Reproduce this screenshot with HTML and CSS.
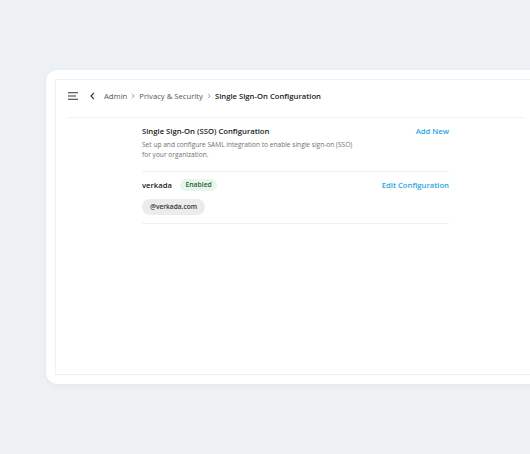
FILE: index.html
```html
<!DOCTYPE html>
<html>
<head>
<meta charset="utf-8">
<link rel="stylesheet" href="styles.css">
</head>
<body>
<div class="card">
  <div class="frame">
    <div class="header">
      <svg class="menu" width="10" height="8" viewBox="0 0 10 8"><path d="M0 0.75H10M0 4H8M0 7.25H10" stroke="#333" stroke-width="1.1"/></svg>
      <svg class="back" width="5" height="8" viewBox="0 0 5 8"><path d="M4 0.8L1 4L4 7.2" stroke="#333" stroke-width="1.2" fill="none"/></svg>
      <nav class="crumbs">
        <span class="crumb">Admin</span>
        <svg class="sep" width="4" height="6" viewBox="0 0 4 6"><path d="M1 0.8L3 3L1 5.2" stroke="#888" stroke-width="0.8" fill="none"/></svg>
        <span class="crumb">Privacy &amp; Security</span>
        <svg class="sep" width="4" height="6" viewBox="0 0 4 6"><path d="M1 0.8L3 3L1 5.2" stroke="#888" stroke-width="0.8" fill="none"/></svg>
        <span class="crumb current">Single Sign-On Configuration</span>
      </nav>
    </div>
    <div class="divider"></div>
    <div class="content">
      <div class="section">
        <div class="section-text">
          <div class="title">Single Sign-On (SSO) Configuration</div>
          <div class="desc">Set up and configure SAML integration to enable single sign-on (SSO) for your organization.</div>
        </div>
        <a class="link">Add New</a>
      </div>
      <div class="row">
        <div class="row-top">
          <div class="row-name">
            <span class="name">verkada</span>
            <span class="badge">Enabled</span>
          </div>
          <a class="link">Edit Configuration</a>
        </div>
        <span class="chip">@verkada.com</span>
      </div>
    </div>
  </div>
</div>
</body>
</html>
```
FILE: styles.css
```css
html, body {
  margin: 0;
  padding: 0;
}
body {
  background: #eef1f3;
  width: 530px;
  height: 454px;
  overflow: hidden;
  font-family: "Open Sans", "Noto Sans", sans-serif;
  color: #222;
}
.card {
  margin: 70px 0 0 46px;
  width: 500px;
  height: 314px;
  box-sizing: border-box;
  padding: 9px;
  background: #fff;
  border-radius: 12px;
  box-shadow: 0 2px 6px rgba(0,0,0,0.04);
}
.frame {
  height: 296px;
  box-sizing: border-box;
  border: 1px solid #eef0f2;
}
.header {
  height: 32px;
  display: flex;
  align-items: center;
  padding-left: 12px;
}
.menu { display: block; }
.back { display: block; margin-left: 12px; }
.crumbs {
  margin-left: 9px;
  display: flex;
  align-items: center;
  gap: 4px;
  font-size: 7.7px;
  color: #555;
}
.sep { display: block; }
.current { font-weight: 600; color: #222; }
.divider {
  margin: 5px 11px 0 11px;
  height: 1px;
  background: #f1f2f4;
}
.content {
  margin-left: 86px;
  width: 307px;
}
.section {
  display: flex;
  justify-content: space-between;
  align-items: flex-start;
  padding: 7px 0 11px;
  border-bottom: 1px solid #eef0f2;
}
.title {
  font-size: 7.7px;
  font-weight: 600;
  line-height: 12px;
}
.desc {
  margin-top: 3px;
  width: 220px;
  font-size: 6.6px;
  line-height: 10px;
  color: #707070;
}
.link {
  font-size: 7.7px;
  font-weight: 600;
  color: #27a7df;
  line-height: 12px;
}
.row {
  padding: 7px 0 8px;
  border-bottom: 1px solid #eef0f2;
}
.row-top {
  display: flex;
  justify-content: space-between;
  align-items: center;
}
.row-name {
  display: flex;
  align-items: center;
  gap: 8px;
}
.name {
  font-size: 7.7px;
  font-weight: 600;
  line-height: 12px;
}
.badge {
  background: #e7f6ea;
  color: #2f5b3c;
  font-size: 6.8px;
  font-weight: 600;
  line-height: 12px;
  padding: 0 5.5px;
  border-radius: 6px;
}
.chip {
  display: inline-block;
  margin-top: 8px;
  background: #ececec;
  color: #333;
  font-size: 6.6px;
  font-weight: 600;
  line-height: 16px;
  padding: 0 8px;
  border-radius: 8px;
}
```
